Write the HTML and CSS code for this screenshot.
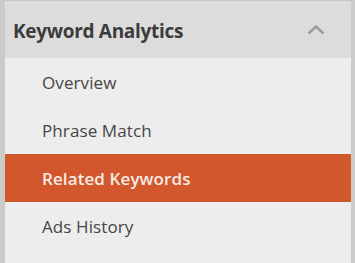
FILE: index.html
```html
<!DOCTYPE html>
<html>
<head>
<meta charset="utf-8">
<link rel="stylesheet" href="styles.css">
</head>
<body>
<div class="panel">
  <div class="head">
    <span class="title">Keyword Analytics</span>
    <svg class="chev" width="18" height="10" viewBox="0 0 18 10"><path d="M1.5 8.5 L9 1.5 L16.5 8.5" fill="none" stroke="#9a9a9a" stroke-width="2.4"/></svg>
  </div>
  <ul class="menu">
    <li class="item">Overview</li>
    <li class="item">Phrase Match</li>
    <li class="item active">Related Keywords</li>
    <li class="item">Ads History</li>
  </ul>
</div>
</body>
</html>
```
FILE: styles.css
```css
html, body {
  margin: 0;
  padding: 0;
  background: #cbcbcb;
  height: 263px;
  overflow: hidden;
}
.panel {
  margin: 0 4px 0 5px;
  height: 263px;
  display: flex;
  flex-direction: column;
  font-family: "Open Sans", "Noto Sans", sans-serif;
}
.head {
  background: #dcdcdc;
  height: 55px;
  margin-top: 2px;
  border-top: 1px dotted #f2f2f2;
  display: flex;
  align-items: center;
  justify-content: space-between;
  padding: 0 26px 0 8px;
  flex: none;
}
.title {
  font-size: 19px;
  font-weight: 700;
  color: #3b3b3b;
  letter-spacing: -0.3px;
}
.chev { display: block; margin-top: -2px; }
.menu {
  list-style: none;
  margin: 0;
  padding: 0;
  background: #ededed;
  flex: 1;
}
.item {
  height: 48px;
  display: flex;
  align-items: center;
  padding-left: 37px;
  font-size: 17px;
  letter-spacing: 0.1px;
  color: #454545;
}
.active {
  background: #d2572d;
  color: #f6ebe4;
  font-weight: 600;
}
```
